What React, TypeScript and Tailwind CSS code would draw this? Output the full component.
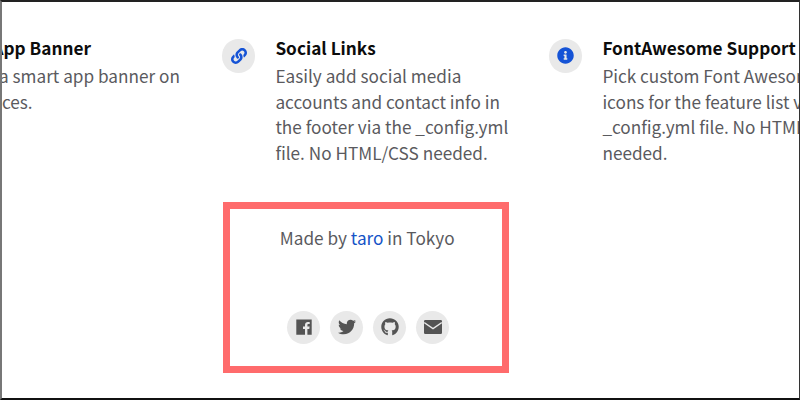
import React from "react";
import { FaLink, FaInfoCircle, FaTwitter, FaGithub } from "react-icons/fa";

function Feature({ icon, title, lines, wide }: { icon: React.ReactNode; title: string; lines: string[]; wide?: boolean }) {
  return (
    <div className={wide ? "flex w-[339px] shrink-0" : "flex w-[327px] shrink-0"}>
      <div className="mr-[20px] flex h-[33.4px] w-[33.4px] shrink-0 items-center justify-center rounded-full bg-[#e9e9e9] text-[#1553d6]">
        {icon}
      </div>
      <div className="mt-[-4px] min-w-0">
        <h3 className="h-[25px] text-[17.2px] leading-[25px] font-bold text-[#0c0c0c] whitespace-nowrap">{title}</h3>
        <div className="pt-[3px]">
          {lines.map((l) => (
            <p key={l} className="h-[25.6px] text-[17.2px] leading-[25.6px] text-[#5a5a5e] whitespace-nowrap">
              {l}
            </p>
          ))}
        </div>
      </div>
    </div>
  );
}

function Social({ children }: { children: React.ReactNode }) {
  return (
    <div className="flex h-[33.4px] w-[33.4px] items-center justify-center rounded-full bg-[#e9e9e9] text-[#545454]">
      {children}
    </div>
  );
}

function FacebookMark() {
  return (
    <svg viewBox="0 0 16 16" width="16" height="16" aria-hidden="true">
      <path
        fill="currentColor"
        d="M0.3 0.5H15.7V15.7H11.4V9.9H13.3L13.6 7.6H11.4V6.2C11.4 5.5 11.6 5.1 12.5 5.1H13.7V3C13.4 3 12.7 2.9 11.9 2.9C10.2 2.9 9 3.9 9 5.9V7.6H7V9.9H9V15.7H0.3Z"
      />
    </svg>
  );
}

function EnvelopeMark() {
  return (
    <svg viewBox="0 0 18 14" width="18" height="14" aria-hidden="true">
      <rect x="0" y="0" width="18" height="14" rx="1.2" fill="currentColor" />
      <path d="M0.2 2.6L9 8.6L17.8 2.6" fill="none" stroke="#e9e9e9" strokeWidth="1.3" />
    </svg>
  );
}

export default function App() {
  return (
    <div
      className="h-[400px] w-[800px] overflow-hidden border-t-2 border-r border-b-2 border-l-2 border-t-[#222] border-r-[#333] border-b-[#111] border-l-[#777] bg-white"
      style={{ fontFamily: '"Noto Sans CJK JP", sans-serif' }}
    >
      <div className="ml-[-119px] flex pt-[37.3px]">
        <Feature
          wide
          icon={<FaLink size={15} />}
          title="Smart App Banner"
          lines={["Display a smart app banner on", "iOS devices."]}
        />
        <Feature
          icon={<FaLink size={16} />}
          title="Social Links"
          lines={["Easily add social media", "accounts and contact info in", "the footer via the _config.yml", "file. No HTML/CSS needed."]}
        />
        <Feature
          icon={<FaInfoCircle size={17} />}
          title="FontAwesome Support"
          lines={["Pick custom Font Awesome", "icons for the feature list via the", "_config.yml file. No HTML/CSS", "needed."]}
        />
      </div>
      <div className="mt-[36px] ml-[220.7px] flex h-[171px] w-[286px] flex-col items-center border-[7.3px] border-[#ff6b6c] bg-white pt-[16px]">
        <p className="ml-[3px] text-[17.2px] leading-[26px] text-[#5a5a5e]">
          Made by <a className="text-[#1553c7]">taro</a> in Tokyo
        </p>
        <div className="mt-[60px] ml-[5px] flex gap-[9.6px]">
          <Social><FacebookMark /></Social>
          <Social><FaTwitter size={18} /></Social>
          <Social><FaGithub size={18} /></Social>
          <Social><EnvelopeMark /></Social>
        </div>
      </div>
    </div>
  );
}
